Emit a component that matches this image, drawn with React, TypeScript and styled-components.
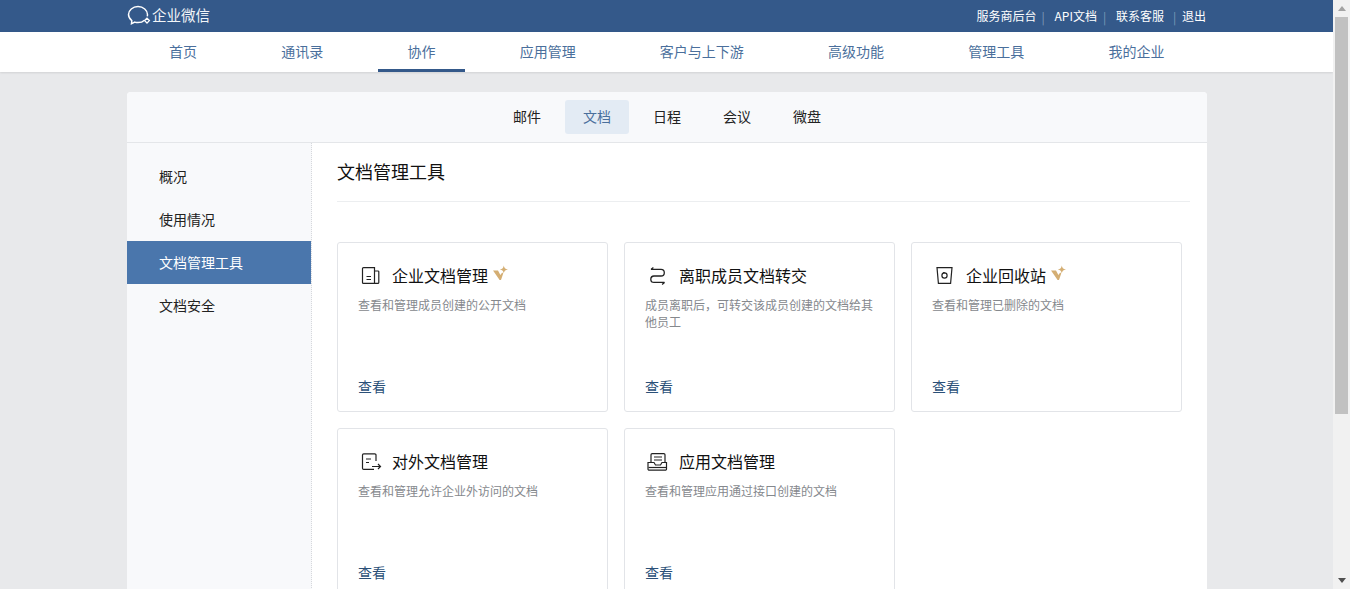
import React from 'react';
import styled, { createGlobalStyle } from 'styled-components';

const navItems = ['首页', '通讯录', '协作', '应用管理', '客户与上下游', '高级功能', '管理工具', '我的企业'];
const tabs = ['邮件', '文档', '日程', '会议', '微盘'];
const sideItems = ['概况', '使用情况', '文档管理工具', '文档安全'];

const Sparkle = () => (
  <SparkleSvg viewBox="0 0 15 16" width="15" height="16">
    <path d="M0 4.6 L5 4.6 L7.4 9 L9.2 6.6 L10.2 7.6 L8 14 L6.6 14 Z" fill="#d4ae73" />
    <path d="M10.8 -0.6 C11.2 1.8 12 2.8 15 3.4 C12 4 11.2 5 10.8 7.6 C10.4 5 9.6 4 6.8 3.4 C9.6 2.8 10.4 1.8 10.8 -0.6 Z" fill="#d4ae73" />
  </SparkleSvg>
);

const DocIcon = () => (
  <svg viewBox="0 0 24 24" width="24" height="24" fill="none" stroke="#222" strokeWidth="1.2">
    <path d="M5.5 3.6 H16.5 V19.4 H5.5 A1 1 0 0 1 4.5 18.4 V4.6 A1 1 0 0 1 5.5 3.6 Z" />
    <path d="M16.5 7 H20 A.8.8 0 0 1 20.8 7.8 V18.4 A1 1 0 0 1 19.8 19.4 H16.5" />
    <path d="M8.5 12.5 H13 M8.5 15.5 H13" />
  </svg>
);

const TransferIcon = () => (
  <svg viewBox="0 0 24 24" width="24" height="24" fill="none" stroke="#222" strokeWidth="1.3">
    <path d="M6 5.4 H16 A3.3 3.3 0 0 1 16 12 H9 A3.2 3.2 0 0 0 9 18.4 H19.5" />
    <path d="M6 5.4 L8.4 3.4 M19.5 18.4 L17.1 20.4" />
  </svg>
);

const BinIcon = () => (
  <svg viewBox="0 0 24 24" width="24" height="24" fill="none" stroke="#222" strokeWidth="1.2">
    <path d="M5 3.6 H20 L18.6 19.4 H6.4 Z" />
    <circle cx="12.5" cy="11.5" r="2.6" />
    <path d="M11 8.5 L13 9" />
  </svg>
);

const ShareIcon = () => (
  <svg viewBox="0 0 24 24" width="24" height="24" fill="none" stroke="#222" strokeWidth="1.2">
    <path d="M18 11 V5 A1.2 1.2 0 0 0 16.8 3.8 H5.7 A1.2 1.2 0 0 0 4.5 5 V18.2 A1.2 1.2 0 0 0 5.7 19.4 H16" />
    <path d="M8 9 H13 M8 12.5 H11" />
    <path d="M14 16.5 H22.5 M20 14 L22.5 16.5 L20 19" />
  </svg>
);

const AppDocIcon = () => (
  <svg viewBox="0 0 24 24" width="24" height="24" fill="none" stroke="#222" strokeWidth="1.2">
    <path d="M6 12 V4.8 A1.2 1.2 0 0 1 7.2 3.6 H18.8 A1.2 1.2 0 0 1 20 4.8 V12" />
    <path d="M9 7 H17 M9 10 H17" />
    <path d="M3 12.5 H9 L10.5 15 H15.5 L17 12.5 H21.5 V19 A1.2 1.2 0 0 1 20.3 20.2 H4.2 A1.2 1.2 0 0 1 3 19 Z" />
    <path d="M3.5 17.5 H21" />
  </svg>
);

const cards = [
  { title: '企业文档管理', desc: '查看和管理成员创建的公开文档', icon: <DocIcon />, vip: true },
  { title: '离职成员文档转交', desc: '成员离职后，可转交该成员创建的文档给其他员工', icon: <TransferIcon />, vip: false },
  { title: '企业回收站', desc: '查看和管理已删除的文档', icon: <BinIcon />, vip: true },
  { title: '对外文档管理', desc: '查看和管理允许企业外访问的文档', icon: <ShareIcon />, vip: false },
  { title: '应用文档管理', desc: '查看和管理应用通过接口创建的文档', icon: <AppDocIcon />, vip: false },
];

const App = () => {
  return (
    <Screen>
      <GlobalStyle />
      <Page>
        <TopBar>
          <TopInner>
            <Logo>
              <svg viewBox="0 0 24 22" width="24" height="22" fill="none" stroke="#fff" strokeWidth="1.5">
                <path d="M17.5 15.2 C15.8 16.8 13.5 17.6 11 17.6 C9.8 17.6 8.7 17.4 7.7 17.1 L4.5 18.8 L4.8 15.6 C2.7 14 1.5 12 1.5 9.6 C1.5 5.2 5.7 1.6 11 1.6 C16.3 1.6 20.5 5.2 20.5 9.6 C20.5 10.2 20.4 10.8 20.3 11.3" />
                <path d="M20 13.2 L22.4 15.6 L20 18 L17.6 15.6 Z" strokeWidth="1.3" />
              </svg>
              <LogoText>企业微信</LogoText>
            </Logo>
            <TopLinks>
              <TopLink>服务商后台</TopLink>
              <TopSep $pad={5} $width={18}>|</TopSep>
              <TopLink>API文档</TopLink>
              <TopSep $pad={6} $width={19}>|</TopSep>
              <TopLink>联系客服</TopLink>
              <TopSep $pad={9} $width={18}>|</TopSep>
              <TopLink>退出</TopLink>
            </TopLinks>
          </TopInner>
        </TopBar>
        <NavBar>
          <NavInner>
            {navItems.map((item) => (
              <NavItem key={item} $active={item === '协作'}>
                {item}
              </NavItem>
            ))}
          </NavInner>
        </NavBar>
        <Panel>
          <TabBar>
            {tabs.map((tab) => (
              <Tab key={tab} $active={tab === '文档'}>
                {tab}
              </Tab>
            ))}
          </TabBar>
          <PanelBody>
            <Sidebar>
              {sideItems.map((item) => (
                <SideItem key={item} $active={item === '文档管理工具'}>
                  {item}
                </SideItem>
              ))}
            </Sidebar>
            <Content>
              <Title>文档管理工具</Title>
              <CardGrid>
                {cards.map((card) => (
                  <Card key={card.title}>
                    <CardHead>
                      <IconBox>{card.icon}</IconBox>
                      <CardTitle>{card.title}</CardTitle>
                      {card.vip && <Sparkle />}
                    </CardHead>
                    <CardDesc>{card.desc}</CardDesc>
                    <CardLink>查看</CardLink>
                  </Card>
                ))}
              </CardGrid>
            </Content>
          </PanelBody>
        </Panel>
      </Page>
      <ScrollTrack>
        <ArrowUp />
        <ScrollThumb />
        <ArrowDown />
      </ScrollTrack>
    </Screen>
  );
};

const GlobalStyle = createGlobalStyle`
  html, body {
    margin: 0;
    padding: 0;
    height: 100%;
    overflow: hidden;
  }
  body {
    font-family: "Noto Sans CJK SC", "Liberation Sans", sans-serif;
    font-size: 14px;
  }
`;

const Screen = styled.div`
  display: flex;
  height: 589px;
  overflow: hidden;
`;

const Page = styled.div`
  flex: 1;
  min-width: 0;
  background: #e8e9eb;
  overflow: hidden;
`;

const TopBar = styled.div`
  height: 32px;
  background: #34598a;
`;

const TopInner = styled.div`
  width: 1080px;
  height: 100%;
  margin-left: 127px;
  display: flex;
  align-items: center;
  justify-content: space-between;
`;

const Logo = styled.div`
  display: flex;
  align-items: center;
  gap: 1px;
`;

const LogoText = styled.span`
  color: #f2f5f8;
  font-size: 14.5px;
  line-height: 30px;
  padding-bottom: 2px;
`;

const TopLinks = styled.div`
  display: flex;
  align-items: center;
  color: #fff;
  font-size: 12px;
  padding-right: 1px;
`;

const TopLink = styled.span`
  color: #fff;
  line-height: 32px;
`;

const TopSep = styled.span<{ $pad: number; $width: number }>`
  color: #7f99b8;
  width: ${(props) => props.$width}px;
  padding-left: ${(props) => props.$pad}px;
  box-sizing: border-box;
  font-size: 12px;
`;

const NavBar = styled.div`
  height: 40px;
  background: #fff;
  box-shadow: 0 1px 2px rgba(0, 0, 0, 0.1);
`;

const NavInner = styled.div`
  width: 1080px;
  height: 100%;
  margin-left: 127px;
  display: flex;
`;

const NavItem = styled.div<{ $active: boolean }>`
  margin: 0 12.5px;
  padding: 0 29.6px;
  height: 40px;
  line-height: 38px;
  box-sizing: border-box;
  font-size: 14px;
  white-space: nowrap;
  color: #4a6f9c;
  border-bottom: 3px solid ${(props) => (props.$active ? '#34598a' : 'transparent')};
`;

const Panel = styled.div`
  width: 1080px;
  margin: 20px 0 0 127px;
  background: #fff;
  border-radius: 4px 4px 0 0;
  height: 600px;
`;

const TabBar = styled.div`
  height: 51px;
  box-sizing: border-box;
  padding-top: 8px;
  display: flex;
  justify-content: center;
  gap: 6px;
  background: #f8f9fb;
  border-radius: 4px 4px 0 0;
  border-bottom: 1px solid #e4e6e9;
`;

const Tab = styled.div<{ $active: boolean }>`
  height: 34px;
  line-height: 32px;
  padding: 0 18px;
  font-size: 14px;
  border-radius: 3px;
  color: ${(props) => (props.$active ? '#4a6f9c' : '#222')};
  background: ${(props) => (props.$active ? '#e3ebf4' : 'transparent')};
`;

const PanelBody = styled.div`
  display: flex;
  height: 549px;
`;

const Sidebar = styled.div`
  width: 185px;
  box-sizing: border-box;
  padding-top: 12px;
  background: #f8f9fb;
  border-right: 1px dotted #d6d8dc;
`;

const SideItem = styled.div<{ $active: boolean }>`
  height: 43px;
  line-height: 43px;
  padding-left: 32px;
  font-size: 14px;
  color: ${(props) => (props.$active ? '#fff' : '#222')};
  background: ${(props) => (props.$active ? '#4a76ac' : 'transparent')};
`;

const Content = styled.div`
  flex: 1;
  min-width: 0;
  padding: 0 17px 0 25px;
`;

const Title = styled.h2`
  margin: 0;
  padding-top: 12px;
  box-sizing: border-box;
  height: 59px;
  line-height: 32px;
  font-size: 18px;
  font-weight: 400;
  color: #111;
  border-bottom: 1px solid #eceef0;
`;

const CardGrid = styled.div`
  display: grid;
  grid-template-columns: repeat(3, 271px);
  grid-auto-rows: 170px;
  gap: 16px;
  margin-top: 40px;
`;

const Card = styled.div`
  display: flex;
  flex-direction: column;
  box-sizing: border-box;
  padding: 21px 20px 15px 20px;
  border: 1px solid #e2e4e8;
  border-radius: 3px;
  background: #fff;
`;

const CardHead = styled.div`
  display: flex;
  align-items: center;
  height: 24px;
`;

const IconBox = styled.span`
  display: flex;
  width: 24px;
  height: 24px;
  margin-right: 10px;
`;

const CardTitle = styled.span`
  font-size: 16px;
  line-height: 22px;
  padding-bottom: 2px;
  color: #111;
`;

const SparkleSvg = styled.svg`
  margin: -4px 0 0 5px;
  overflow: visible;
`;

const CardDesc = styled.p`
  margin: 8px 0 0;
  flex: 1;
  font-size: 12px;
  line-height: 17px;
  color: #85888d;
`;

const CardLink = styled.span`
  font-size: 14px;
  line-height: 20px;
  color: #2b5078;
`;

const ScrollTrack = styled.div`
  width: 17px;
  flex: none;
  display: flex;
  flex-direction: column;
  align-items: center;
  background: #f1f1f1;
`;

const ArrowUp = styled.div`
  width: 0;
  height: 0;
  margin: 6px 0 6px;
  border-left: 4px solid transparent;
  border-right: 4px solid transparent;
  border-bottom: 5px solid #a3a3a3;
`;

const ScrollThumb = styled.div`
  width: 13px;
  height: 397px;
  background: #c1c1c1;
`;

const ArrowDown = styled.div`
  width: 0;
  height: 0;
  margin-top: auto;
  margin-bottom: 6px;
  border-left: 4px solid transparent;
  border-right: 4px solid transparent;
  border-top: 5px solid #505050;
`;

export default App;
